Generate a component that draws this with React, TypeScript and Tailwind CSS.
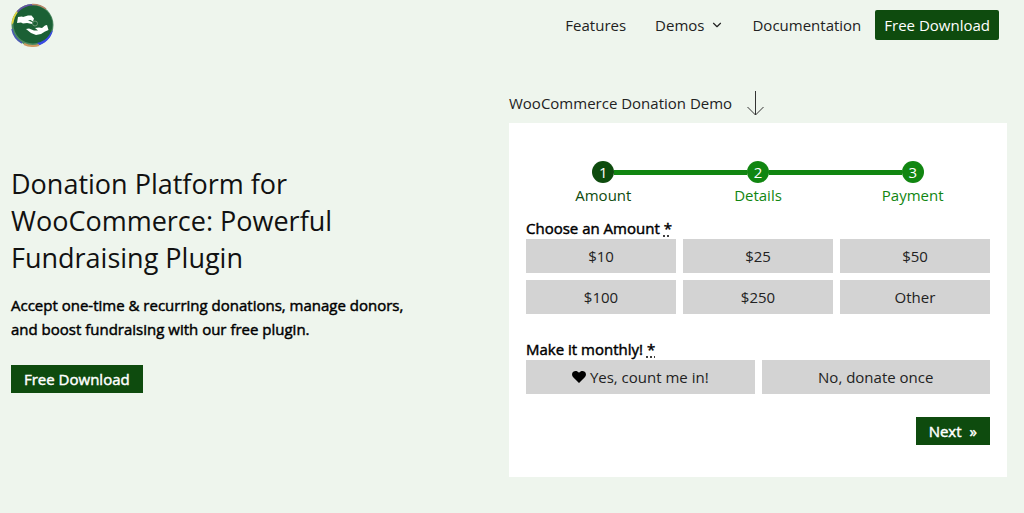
import { ChevronDown } from "lucide-react";

const steps = ["Amount", "Details", "Payment"];
const amounts = ["$10", "$25", "$50", "$100", "$250", "Other"];

function Logo() {
  return (
    <svg className="h-[44px] w-[44px]" viewBox="0 0 44 44" aria-hidden="true">
      <circle cx="22.500" cy="22" r="21" fill="#4d8a62" />
      <path d="M1.500 22A21 21 0 0 1 8 7L12 7L5 18Z" fill="#e2d640" />
      <path d="M7 8A21 21 0 0 1 22 1L25 3L13 7L8 11Z" fill="#6450a6" />
      <path d="M22 1.500A20.500 20.500 0 0 1 36 6" fill="none" stroke="#b98468" strokeWidth="1.500" />
      <path d="M43 27A21 21 0 0 1 27 43L28 39L38 32Z" fill="#3a49e4" />
      <path d="M29 42A20.500 20.500 0 0 1 14 41" fill="none" stroke="#cf9a62" strokeWidth="2" />
      <path d="M2 26A20.500 20.500 0 0 0 12 40" fill="none" stroke="#4a59b4" strokeWidth="1.500" />
      <ellipse cx="23" cy="21.500" rx="19.500" ry="19" fill="#1b6035" />
      <path d="M8 14L12 13.500L13 14L18 12.500L21.500 12.500L24 15.500L23 18.500L20.500 17L18 17.500L22 19L22.500 21L17 20L13 20.500L11 19.500L7 20Z" fill="#fff" />
      <path d="M16 26L19 25.500L24 27.500L28 27.500L25 25L29 24.500L32 25L35 22.500L37 22L38.500 27L35 28.500L31 31L26 32L21 30Z" fill="#fff" />
      <circle cx="25" cy="20.500" r="2.500" fill="none" stroke="#6a9675" strokeWidth="1" />
    </svg>
  );
}

function Required() {
  return (
    <abbr title="required" className="underline decoration-dotted underline-offset-2">
      *
    </abbr>
  );
}

const choice = "h-[34px] bg-[#d3d3d3] text-[15px] leading-5 text-[#222]";
const label = "text-[15px] leading-5 text-black [-webkit-text-stroke:0.03em]";

export default function App() {
  return (
    <div className="min-h-screen bg-[#eef5ed] font-['Open_Sans',sans-serif] text-[15px] leading-5 text-[#222]">
      <header className="flex h-[50px] items-center justify-between pr-[25px] pl-[10px]">
        <a href="#home" aria-label="Donation Platform">
          <Logo />
        </a>
        <nav className="flex items-center">
          <a href="#features" className="mr-[29px]">Features</a>
          <a href="#demos" className="mr-[28px] flex items-center gap-[6px]">
            Demos
            <ChevronDown size={14} strokeWidth={2} />
          </a>
          <a href="#docs" className="mr-[14px]">Documentation</a>
          <a href="#download" className="flex h-[30px] items-center rounded-[2px] bg-[#0e4b0e] px-[9px] text-white">
            Free Download
          </a>
        </nav>
      </header>

      <main className="grid grid-cols-2 pr-[17px] pl-[11px] pt-[35px]">
        <section className="flex flex-col items-start pt-[80px]">
          <h1 className="max-w-[340px] text-[27px] leading-[37px] text-[#111]">
            Donation Platform for WooCommerce: Powerful Fundraising Plugin
          </h1>
          <p className="mt-[17px] max-w-[420px] leading-6 text-black [-webkit-text-stroke:0.03em]">
            Accept one-time &amp; recurring donations, manage donors, and boost fundraising with our free plugin.
          </p>
          <a
            href="#download"
            className="mt-6 flex h-[28px] items-center bg-[#0e4b0e] px-[13px] text-white [-webkit-text-stroke:0.03em]"
          >
            Free Download
          </a>
        </section>

        <section>
          <div className="mb-[3px] flex h-[35px] items-center gap-[14px]">
            <h2>WooCommerce Donation Demo</h2>
            <svg className="h-[26px] w-[18px]" viewBox="0 0 18 26" fill="none" stroke="#333" aria-hidden="true">
              <path d="M9.500 1V25M1.500 17L9.500 25L17.500 17" />
            </svg>
          </div>
          <form className="bg-white px-[17px] pt-[38px] pb-8" onSubmit={(e) => e.preventDefault()}>
            <ol className="grid grid-cols-3">
              {steps.map((step, i) => (
                <li
                  key={step}
                  className={`flex flex-col items-center ${i === 0 ? "text-[#0e4b0e]" : "text-[#118611]"}`}
                >
                  <div className="flex w-full items-center">
                    <span className={`h-[5px] flex-1 ${i > 0 ? "bg-[#118611]" : ""}`} />
                    <span
                      className={`flex size-[22px] items-center justify-center rounded-full text-white ${
                        i === 0 ? "bg-[#0e4b0e]" : "bg-[#118611]"
                      }`}
                    >
                      {i + 1}
                    </span>
                    <span className={`h-[5px] flex-1 ${i < 2 ? "bg-[#118611]" : ""}`} />
                  </div>
                  <span className="mt-[2px]">{step}</span>
                </li>
              ))}
            </ol>

            <fieldset className="mt-[13px]">
              <legend className={label}>
                Choose an Amount <Required />
              </legend>
              <div className="mt-px grid grid-cols-3 gap-[7px]">
                {amounts.map((amount) => (
                  <button key={amount} type="button" className={choice}>
                    {amount}
                  </button>
                ))}
              </div>
            </fieldset>

            <fieldset className="mt-[25px]">
              <legend className={label}>
                Make it monthly! <Required />
              </legend>
              <div className="mt-px grid grid-cols-2 gap-[7px]">
                <button type="button" className={`${choice} flex items-center justify-center gap-1`}>
                  <svg className="h-[12px] w-[14px]" viewBox="0 0 14 12" fill="#000" aria-hidden="true">
                    <path d="M7 12L1.200 6.300C-.4 4.600-.3 2 1.300.8C3-.4 5.300-.2 7 1.700C8.700-.2 11-.4 12.700.8C14.300 2 14.400 4.600 12.800 6.300Z" />
                  </svg>
                  Yes, count me in!
                </button>
                <button type="button" className={choice}>
                  No, donate once
                </button>
              </div>
            </fieldset>

            <div className="mt-[23px] flex justify-end">
              <button
                type="submit"
                className="flex h-[28px] items-center gap-2 bg-[#0e4b0e] px-[13px] text-white [-webkit-text-stroke:0.03em]"
              >
                Next <span>»</span>
              </button>
            </div>
          </form>
        </section>
      </main>
    </div>
  );
}
